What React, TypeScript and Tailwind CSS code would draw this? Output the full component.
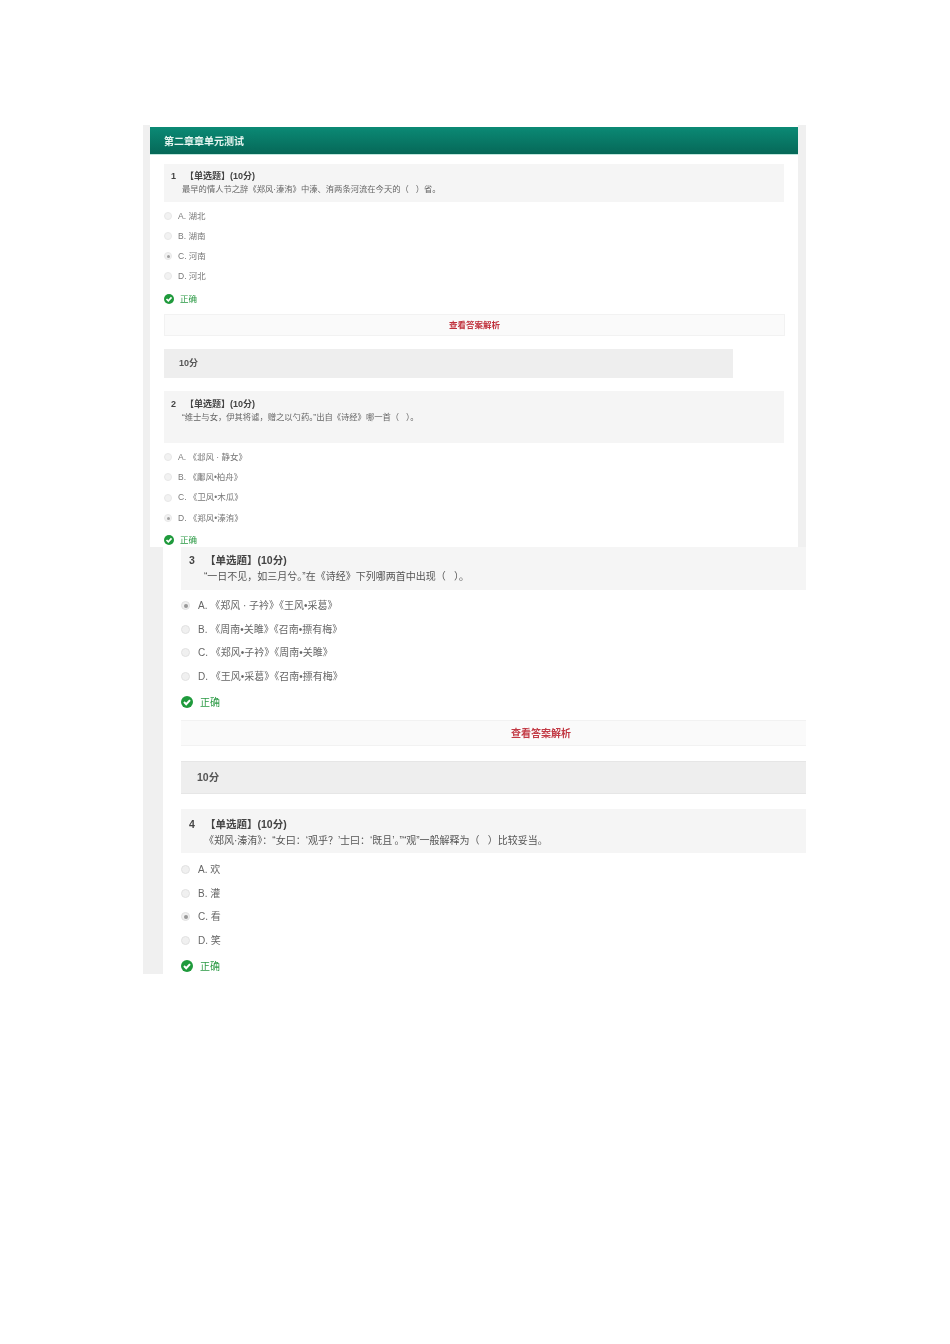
import React from "react";

const font = { fontFamily: '"Liberation Sans", "Noto Sans CJK SC", sans-serif' };

function Radio({ on, big }: { on?: boolean; big?: boolean }) {
  return (
    <span
      className={
        big
          ? "flex h-[9px] w-[9px] shrink-0 items-center justify-center rounded-full border border-[#e2e2e2] bg-[#f0f0f0]"
          : "flex h-[8px] w-[8px] shrink-0 items-center justify-center rounded-full border border-[#e8e8e8] bg-[#f2f2f2]"
      }
    >
      {on ? <span className={big ? "h-[4px] w-[4px] rounded-full bg-[#999999]" : "h-[3px] w-[3px] rounded-full bg-[#a0a0a0]"} /> : null}
    </span>
  );
}

function Check({ size }: { size: number }) {
  return (
    <svg width={size} height={size} viewBox="0 0 12 12" className="shrink-0">
      <circle cx="6" cy="6" r="6" fill="#1f9a3c" />
      <path d="M3 6 L5.2 8.2 L9 4.1" fill="none" stroke="#ffffff" strokeWidth="2" />
    </svg>
  );
}

function Opts1({ items, on, rows }: { items: string[]; on: number; rows: string[] }) {
  return (
    <div>
      {items.map((t, i) => (
        <div key={t} className={`flex items-center text-[8.5px] text-[#777777] ${rows[i]}`}>
          <Radio on={i === on} />
          <span className="ml-[6px]">{t}</span>
        </div>
      ))}
    </div>
  );
}

function Opts2({ items, on }: { items: string[]; on: number }) {
  return (
    <div>
      {items.map((t, i) => (
        <div key={t} className="flex h-[23.5px] items-center text-[10px] text-[#666666]">
          <Radio on={i === on} big />
          <span className="ml-[8px]">{t}</span>
        </div>
      ))}
    </div>
  );
}

function Q1({ n, text, cls }: { n: string; text: React.ReactNode; cls: string }) {
  return (
    <div className={`w-[620px] bg-[#f5f5f5] pl-[7px] ${cls}`}>
      <div className="flex h-[12px] items-center text-[9px] font-bold leading-none text-[#444444]">
        <span className="w-[14px]">{n}</span>
        <span>【单选题】(10分)</span>
      </div>
      <div className="ml-[11px] mt-[1px] flex h-[13px] items-center text-[8.3px] text-[#666666]">{text}</div>
    </div>
  );
}

function Q2({ n, text, cls }: { n: string; text: React.ReactNode; cls: string }) {
  return (
    <div className={`bg-[#f5f5f5] pl-[8px] ${cls}`}>
      <div className="flex h-[15px] items-center text-[10.5px] font-bold leading-none text-[#444444]">
        <span className="w-[16px]">{n}</span>
        <span>【单选题】(10分)</span>
      </div>
      <div className="ml-[15px] flex h-[16px] items-center text-[10px] text-[#555555]">{text}</div>
    </div>
  );
}

export default function App() {
  return (
    <div className="min-h-[1344px] bg-white pl-[143px] pt-[125px]" style={font}>
      <div className="w-[663px] blur-[0.5px]">
        {/* first capture */}
        <div className="flex h-[422px] overflow-hidden">
          <div className="w-[7px] shrink-0 bg-[#f0f0f0]" />
          <div className="min-w-0 flex-1 bg-white pt-[2px]">
            <div className="flex h-[28px] items-center border-b border-[#bfe6dc] bg-gradient-to-b from-[#0b8a75] to-[#066858] pl-[14px] pt-[1px] text-[10px] font-bold text-[#e6f5f0]">
              第二章章单元测试
            </div>
            <div className="pl-[14px]">
              <Q1 n="1" text={<>最早的情人节之辞《郑风·溱洧》中溱、洧两条河流在今天的（&nbsp;&nbsp;&nbsp;）省。</>} cls="mt-[9px] h-[38px] pt-[6px]" />
              <div className="mt-[4px]">
                <Opts1 items={["A. 湖北", "B. 湖南", "C. 河南", "D. 河北"]} on={2} rows={["h-[20px]", "h-[20px]", "h-[20px]", "h-[20px]"]} />
              </div>
              <div className="flex h-[26px] items-center text-[8.5px] text-[#2c9a45]">
                <Check size={10} />
                <span className="ml-[6px]">正确</span>
              </div>
              <div className="mt-[2px] flex h-[22px] w-[621px] items-center justify-center border border-[#f2f2f2] bg-[#fafafa] pt-[1px] text-[8.5px] font-bold text-[#c0303c]">
                查看答案解析
              </div>
              <div className="mt-[13px] flex h-[29px] w-[569px] items-center bg-[#eeeeee] pl-[15px] pt-[1px] text-[9px] font-bold text-[#555555]">
                10分
              </div>
              <Q1 n="2" text={<>“维士与女，伊其将谑，赠之以勺药。”出自《诗经》哪一首（&nbsp;&nbsp;&nbsp;）。</>} cls="mt-[13px] h-[52px] pt-[7px]" />
              <div className="mt-[4px]">
                <Opts1
                  items={["A. 《邶风 · 静女》", "B. 《鄘风•柏舟》", "C. 《卫风•木瓜》", "D. 《郑风•溱洧》"]}
                  on={3}
                  rows={["h-[20px]", "h-[20px]", "h-[21px]", "h-[20px]"]}
                />
              </div>
              <div className="flex h-[24px] items-center text-[8.5px] text-[#2c9a45]">
                <Check size={10} />
                <span className="ml-[6px]">正确</span>
              </div>
            </div>
          </div>
          <div className="w-[8px] shrink-0 bg-[#f0f0f0]" />
        </div>

        {/* second capture */}
        <div className="flex h-[427px] overflow-hidden">
          <div className="w-[20px] shrink-0 bg-[#f0f0f0]" />
          <div className="min-w-0 flex-1 bg-white pl-[18px]">
            <Q2 n="3" text={<>“一日不见，如三月兮。”在《诗经》下列哪两首中出现（&nbsp;&nbsp;&nbsp;）。</>} cls="h-[43px] pt-[6px]" />
            <div className="mt-[4px]">
              <Opts2
                items={["A. 《郑风 · 子衿》《王风•采葛》", "B. 《周南•关雎》《召南•摽有梅》", "C. 《郑风•子衿》《周南•关雎》", "D. 《王风•采葛》《召南•摽有梅》"]}
                on={0}
              />
            </div>
            <div className="mt-[4px] flex h-[20px] items-center text-[10px] text-[#2c9a45]">
              <Check size={12} />
              <span className="ml-[7px]">正确</span>
            </div>
            <div className="mt-[8px] flex h-[26px] items-center justify-center border-y border-[#f2f2f2] bg-[#fafafa] pl-[95px] text-[10px] font-bold text-[#c23a45]">
              查看答案解析
            </div>
            <div className="mt-[15px] flex h-[33px] items-center border-y border-[#e6e6e6] bg-[#eeeeee] pl-[16px] pt-[1px] text-[10.5px] font-bold text-[#555555]">
              10分
            </div>
            <Q2 n="4" text={<>《郑风·溱洧》：“女曰：‘观乎？’士曰：‘既且’。”“观”一般解释为（&nbsp;&nbsp;&nbsp;）比较妥当。</>} cls="mt-[15px] h-[44px] pt-[8px]" />
            <div className="mt-[5px]">
              <Opts2 items={["A. 欢", "B. 灌", "C. 看", "D. 笑"]} on={2} />
            </div>
            <div className="mt-[4px] flex h-[20px] items-center text-[10px] text-[#2c9a45]">
              <Check size={12} />
              <span className="ml-[7px]">正确</span>
            </div>
          </div>
        </div>
      </div>
    </div>
  );
}
